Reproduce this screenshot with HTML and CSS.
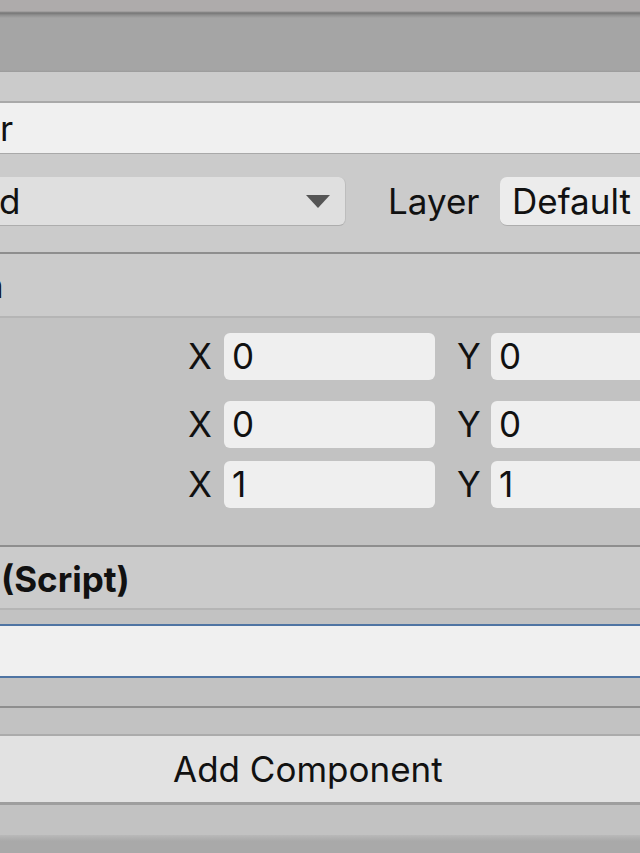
FILE: index.html
```html
<!DOCTYPE html>
<html>
<head>
<meta charset="utf-8">
<link rel="stylesheet" href="styles.css">
</head>
<body>
<div class="inspector">
  <div class="tabbar"></div>
  <div class="go-header">
    <div class="name-field">r</div>
    <div class="tag-row">
      <div class="dropdown">
        <span class="dd-text">d</span>
        <svg class="dd-arrow" width="24" height="14" viewBox="0 0 24 14"><path d="M0 0 H24 L12 13 Z" fill="#555"/></svg>
      </div>
      <span class="layer-label">Layer</span>
      <div class="layer-field">Default</div>
    </div>
  </div>
  <div class="comp-header"><span class="comp-title partial">n</span></div>
  <div class="comp-body transform">
    <div class="vec-row first">
      <span class="axis">X</span><div class="num-field">0</div>
      <span class="axis y">Y</span><div class="num-field wide">0</div>
    </div>
    <div class="vec-row second">
      <span class="axis">X</span><div class="num-field">0</div>
      <span class="axis y">Y</span><div class="num-field wide">0</div>
    </div>
    <div class="vec-row third">
      <span class="axis">X</span><div class="num-field">1</div>
      <span class="axis y">Y</span><div class="num-field wide">1</div>
    </div>
  </div>
  <div class="comp-header script"><span class="comp-title">(Script)</span></div>
  <div class="comp-body script-body">
    <div class="script-field"></div>
  </div>
  <div class="add-area">
    <div class="add-button">Add Component</div>
  </div>
  <div class="bottom-bar"></div>
</div>
</body>
</html>
```
FILE: styles.css
```css
html, body {
  margin: 0;
  padding: 0;
  overflow: hidden;
  background: #a9a9a9;
}
.inspector {
  width: 640px;
  height: 853px;
  overflow: hidden;
  font-family: "Inter", "Liberation Sans", sans-serif;
  font-size: 35px;
  color: #111;
  background: #c2c2c2;
}
.tabbar {
  height: 72px;
  background: linear-gradient(to bottom, #aeabab 0, #aeabab 11px, #767676 13px, #8e8e8e 15px, #a5a5a5 18px, #a5a5a5 70px, #9a9a9a 72px);
}
.go-header {
  background: #cbcbcb;
  padding-top: 29px;
  padding-bottom: 26px;
  border-bottom: 2px solid #8e8e8e;
}
.name-field {
  height: 50px;
  background: #f0f0f0;
  border-top: 2px solid #a9a9a9;
  border-bottom: 1px solid #a9a9a9;
  line-height: 50px;
}
.tag-row {
  margin-top: 22px;
  display: flex;
  align-items: center;
  height: 50px;
}
.dropdown {
  flex: none;
  width: 346px;
  height: 49px;
  background: #dfdfdf;
  border-bottom: 1px solid #adadad;
  border-right: 1px solid #bdbdbd;
  border-radius: 0 7px 7px 0;
  display: flex;
  align-items: center;
  justify-content: space-between;
  padding-right: 15px;
  box-sizing: border-box;
}
.dd-text { margin-left: -1px; }
.dd-arrow { margin-top: 2px; }
.layer-label {
  flex: none;
  margin-left: 42px;
  width: 112px;
}
.layer-field {
  flex: 1;
  height: 48px;
  background: #ececec;
  border-radius: 7px 0 0 7px;
  border-bottom: 1px solid #adadad;
  padding-left: 12px;
  line-height: 48px;
  white-space: nowrap;
  overflow: hidden;
}
.comp-header {
  height: 62px;
  background: #cbcbcb;
  border-bottom: 2px solid #b5b5b5;
  display: flex;
  align-items: center;
  overflow: hidden;
}
.comp-title.partial {
  margin-left: -17px;
}
.comp-header.script {
  height: 61px;
  border-top: 2px solid #8e8e8e;
}
.comp-header.script .comp-title {
  font-weight: 700;
  margin-left: 1px;
  margin-top: 2px;
}
.comp-body {
  background: #c2c2c2;
}
.transform {
  padding-top: 15px;
  padding-bottom: 37px;
  overflow: hidden;
}
.vec-row {
  display: flex;
  align-items: center;
  padding-left: 188px;
  height: 47px;
}
.vec-row > * { flex: none; }
.vec-row.second { margin-top: 21px; }
.vec-row.third { margin-top: 13px; }
.axis {
  width: 36px;
  line-height: 47px;
}
.axis.y {
  width: 34px;
  margin-left: 22px;
}
.num-field {
  width: 211px;
  height: 47px;
  line-height: 47px;
  background: #efefef;
  border-radius: 6px;
  padding-left: 8px;
  box-sizing: border-box;
}
.num-field.wide {
  width: 200px;
  border-radius: 6px 0 0 6px;
}
.script-body {
  padding-top: 14px;
  padding-bottom: 28px;
  border-bottom: 2px solid #8e8e8e;
}
.script-field {
  height: 50px;
  background: #f0f0f0;
  border-top: 2px solid #4f74a3;
  border-bottom: 2px solid #4f74a3;
}
.add-area {
  background: #c2c2c2;
  padding-top: 26px;
  padding-bottom: 30px;
}
.add-button {
  height: 66px;
  background: #e2e2e2;
  border-top: 2px solid #ababab;
  border-bottom: 3px solid #9e9e9e;
  line-height: 66px;
  padding-left: 173px;
  white-space: nowrap;
}
.bottom-bar {
  height: 20px;
  background: linear-gradient(to bottom, #b9b9b9 0, #a9a9a9 6px, #a9a9a9 100%);
}
```
